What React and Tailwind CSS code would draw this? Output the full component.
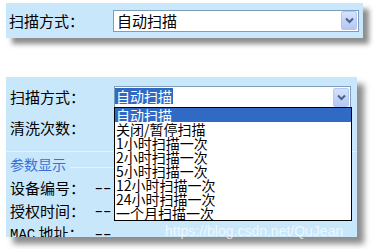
import React from "react";

const cjk = { fontFamily: '"Noto Sans CJK SC", "Noto Sans", sans-serif' };

function DropBtn() {
  return (
    <div className="flex h-[19px] w-[16px] items-center justify-center rounded-[2px] border border-[#b5c8f3] bg-gradient-to-b from-[#d6e2fc] to-[#b3c7f5]">
      <svg width="9" height="7" viewBox="0 0 9 7">
        <path d="M1 1.5 L4.5 5 L8 1.5" fill="none" stroke="#4d6185" strokeWidth="2" />
      </svg>
    </div>
  );
}

function Label({ children }) {
  return (
    <div className="w-[104px] shrink-0 text-[15px] leading-[18px] text-black" style={cjk}>
      {children}
    </div>
  );
}

const items = [
  "自动扫描",
  "关闭/暂停扫描",
  "1小时扫描一次",
  "2小时扫描一次",
  "5小时扫描一次",
  "12小时扫描一次",
  "24小时扫描一次",
  "一个月扫描一次",
];

export default function App() {
  return (
    <div className="relative h-[249px] w-[374px] overflow-hidden bg-white pl-[6px] pt-[3px]" style={cjk}>
      {/* top panel */}
      <div className="flex h-[35px] w-[357px] items-center bg-[#c9e7fb] pl-[3px] shadow-[6px_6px_5px_rgba(0,0,0,0.45)]">
        <Label>扫描方式：</Label>
        <div className="flex h-[22px] w-[246px] items-center justify-between border border-[#7f9db9] bg-white pl-[3px] pr-[1px]">
          <span className="text-[15px] leading-[18px] text-black">自动扫描</span>
          <DropBtn />
        </div>
      </div>

      {/* bottom panel */}
      <div className="relative mt-[39px] flex h-[160px] w-[351px] flex-col overflow-hidden bg-[#c9e7fb] shadow-[7px_7px_6px_rgba(0,0,0,0.45)]">
        <div className="ml-[191px] mr-[4px] mt-[1px] h-[1px] bg-[#9bb9cf]" />
        {/* scan settings */}
        <div className="flex flex-col border-b border-[#e4f2fc] pb-[12px]">
          <div className="mt-[8px] flex h-[22px] items-center pl-[4px]">
            <Label>扫描方式：</Label>
            <div className="relative h-[22px] w-[237px] border border-[#7f9db9] bg-white">
              <div className="flex h-full items-start justify-between pl-[0px] pr-[1px] pt-[1px]">
                <span className="bg-[#316ac5] px-[1px] text-[14px] leading-[16px] text-white">自动扫描</span>
                <DropBtn />
              </div>
              {/* open list */}
              <div className="absolute left-[-1px] top-[20px] z-10 w-[238px] border border-black bg-white">
                {items.map((t, i) => (
                  <div
                    key={t}
                    className={
                      "h-[14px] pl-[1px] text-[14px] leading-[14px] " +
                      (i === 0 ? "bg-[#316ac5] text-white" : "text-black")
                    }
                  >
                    {t}
                  </div>
                ))}
              </div>
            </div>
          </div>
          <div className="mt-[9px] flex h-[22px] items-center pl-[4px]">
            <Label>清洗次数：</Label>
          </div>
        </div>
        {/* params legend */}
        <div className="mt-[4px] flex items-center pl-[4px]">
          <span className="text-[14px] leading-[16px] text-[#3b6fd6]">参数显示</span>
          <div className="ml-[4px] mr-[6px] mt-[6px] h-[1px] flex-1 bg-[#e4f2fc]" />
        </div>
        <div className="mt-[7px] flex flex-col gap-[5px] pl-[4px]">
          {[
            ["设备编号：", false],
            ["授权时间：", false],
            ["MAC 地址：", true],
          ].map(([l, mac]) => (
            <div key={l} className="flex h-[18px] items-center">
              <div className="w-[85px] shrink-0 text-[15px] leading-[18px] text-black">
                {mac ? (
                  <>
                    <span style={{ fontFamily: '"Liberation Mono", monospace' }} className="text-[14px]">
                      MAC
                    </span>{" "}
                    地址：
                  </>
                ) : (
                  l
                )}
              </div>
              <span
                className="text-[15px] leading-[18px] tracking-[1px] text-black"
                style={{ fontFamily: '"DejaVu Sans", sans-serif' }}
              >
                ––
              </span>
            </div>
          ))}
        </div>
      </div>

      {/* watermark */}
      <div
        className="absolute left-[165px] top-[223px] text-[14px] leading-[16px] text-white/70"
        style={{ fontFamily: '"Liberation Sans", Arial, sans-serif' }}
      >
        https://blog.csdn.net/QuJean
      </div>
    </div>
  );
}
